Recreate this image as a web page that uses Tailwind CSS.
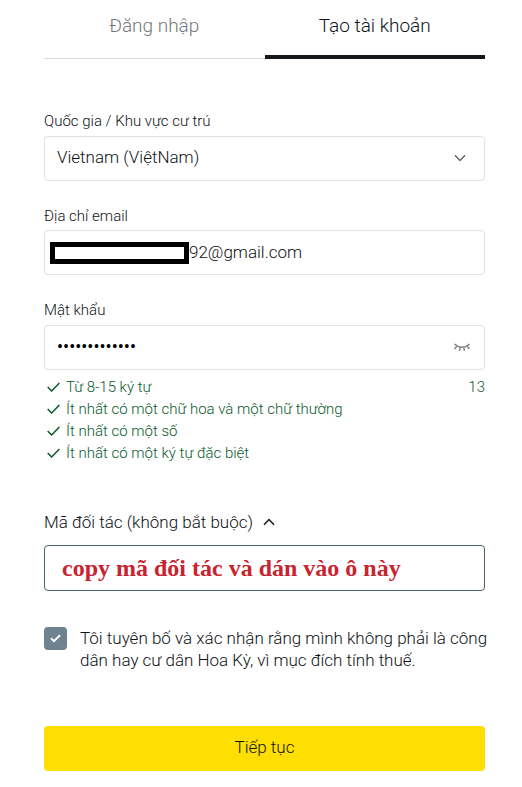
<!DOCTYPE html>
<html lang="vi">
<head>
    <meta charset="UTF-8">
    <meta name="viewport" content="width=device-width, initial-scale=1.0">
    <title>Tạo tài khoản</title>
    <script src="https://cdn.jsdelivr.net/npm/@tailwindcss/browser@4"></script>
</head>
<body class="bg-white text-[#0e1215] font-light font-['Roboto','Liberation_Sans',sans-serif]">

    <main class="pl-11 pr-[37px] pb-4">

        <!-- Tabs -->
        <nav class="grid grid-cols-2 h-[59px] text-[19px] leading-7 text-center">
            <a href="#" class="pt-3 border-b border-[#d9dcde] text-[#74787b]">Đăng nhập</a>
            <a href="#" class="pt-3 border-b-4 border-[#14181b]" aria-current="page">Tạo tài khoản</a>
        </nav>

        <form class="pt-[52px]">

            <!-- Country -->
            <div class="mb-[25px]">
                <label for="country" class="block text-[15px] leading-5 mb-[5px]">Quốc gia / Khu vực cư trú</label>
                <div class="relative">
                    <select id="country" class="appearance-none block w-full h-[45px] px-3 pb-[2px] border border-[#dfe1e3] rounded bg-white text-[17px]">
                        <option>Vietnam (ViệtNam)</option>
                    </select>
                    <svg class="absolute right-[19px] top-[18px] w-3 h-2 pointer-events-none" viewBox="0 0 12 8" fill="none" stroke="#5f6467" stroke-width="1.4"><path d="M1 1.2 6 6.4 11 1.2"/></svg>
                </div>
            </div>

            <!-- Email -->
            <div class="mb-[25px]">
                <label for="email" class="block text-[15px] leading-5 mb-1">Địa chỉ email</label>
                <div class="flex items-center h-[45px] pl-[5px] border border-[#dfe1e3] rounded">
                    <span class="shrink-0 w-[139px] h-[22px] border-[5px] border-black"></span>
                    <input id="email" type="text" value="92@gmail.com" class="flex-1 min-w-0 h-full pb-[2px] text-[17px] outline-none">
                </div>
            </div>

            <!-- Password -->
            <div>
                <label for="password" class="block text-[15px] leading-5 mb-[5px]">Mật khẩu</label>
                <div class="flex items-center h-[45px] px-3 border border-[#dfe1e3] rounded">
                    <input id="password" type="password" value="Abcdefgh1234!" class="flex-1 min-w-0 h-full pb-[2px] text-lg font-normal text-black outline-none">
                    <button type="button" aria-label="Hiện mật khẩu" class="mr-px">
                        <svg class="w-[18px] h-3" viewBox="0 0 18 12" fill="none" stroke="#85898c" stroke-width="1.5"><path d="M1.6 2C5.4 6.2 12.6 6.2 16.4 2M4 4 1.6 7M7.2 5.2 6.6 9M10.8 5.2 11.4 9M14 4 16.4 7"/></svg>
                    </button>
                </div>
                <div class="flex justify-between pt-[6px] text-[15px] leading-[22px] text-[#0a5a2b]">
                    <ul>
                        <li class="flex items-center gap-[6px] pl-[3px]">
                            <svg class="w-[13px] h-[10px]" viewBox="0 0 13 10" fill="none" stroke="currentColor" stroke-width="1.5"><path d="M.7 5 4.6 9 12.4 1"/></svg>
                            Từ 8-15 ký tự
                        </li>
                        <li class="flex items-center gap-[6px] pl-[3px]">
                            <svg class="w-[13px] h-[10px]" viewBox="0 0 13 10" fill="none" stroke="currentColor" stroke-width="1.5"><path d="M.7 5 4.6 9 12.4 1"/></svg>
                            Ít nhất có một chữ hoa và một chữ thường
                        </li>
                        <li class="flex items-center gap-[6px] pl-[3px]">
                            <svg class="w-[13px] h-[10px]" viewBox="0 0 13 10" fill="none" stroke="currentColor" stroke-width="1.5"><path d="M.7 5 4.6 9 12.4 1"/></svg>
                            Ít nhất có một số
                        </li>
                        <li class="flex items-center gap-[6px] pl-[3px]">
                            <svg class="w-[13px] h-[10px]" viewBox="0 0 13 10" fill="none" stroke="currentColor" stroke-width="1.5"><path d="M.7 5 4.6 9 12.4 1"/></svg>
                            Ít nhất có một ký tự đặc biệt
                        </li>
                    </ul>
                    <span>13</span>
                </div>
            </div>

            <!-- Partner code -->
            <div class="mt-[46px]">
                <div class="flex items-center gap-[10px] mb-[11px]">
                    <label for="partner" class="text-[17px] leading-6">Mã đối tác (không bắt buộc)</label>
                    <button type="button" aria-label="Thu gọn">
                        <svg class="w-3 h-2" viewBox="0 0 12 8" fill="none" stroke="#14181b" stroke-width="1.5"><path d="M1 6.8 6 1.6 11 6.8"/></svg>
                    </button>
                </div>
                <input id="partner" type="text" value="copy mã đối tác và dán vào ô này" class="block w-full h-[46px] px-[17px] border border-[#4c5f6d] rounded text-2xl font-bold text-[#c8242f] font-['Liberation_Serif',serif] outline-none">
            </div>

            <!-- Declaration -->
            <div class="relative flex items-start gap-[13px] mt-9">
                <input id="declare" type="checkbox" checked class="appearance-none shrink-0 w-[23px] h-[23px] rounded bg-[#6f828f]">
                <svg class="absolute left-[6px] top-[7px] w-[11px] h-[9px] pointer-events-none" viewBox="0 0 11 9" fill="none" stroke="white" stroke-width="2"><path d="M1 4.3 4 7.2 10 1.2"/></svg>
                <label for="declare" class="-mr-3 text-[17px] leading-[22px]">Tôi tuyên bố và xác nhận rằng mình không phải là công dân hay cư dân Hoa Kỳ, vì mục đích tính thuế.</label>
            </div>

            <button type="submit" class="block w-full h-[45px] mt-[55px] pb-[2px] rounded bg-[#ffde02] text-[17px]">Tiếp tục</button>
        </form>
    </main>

</body>
</html>
